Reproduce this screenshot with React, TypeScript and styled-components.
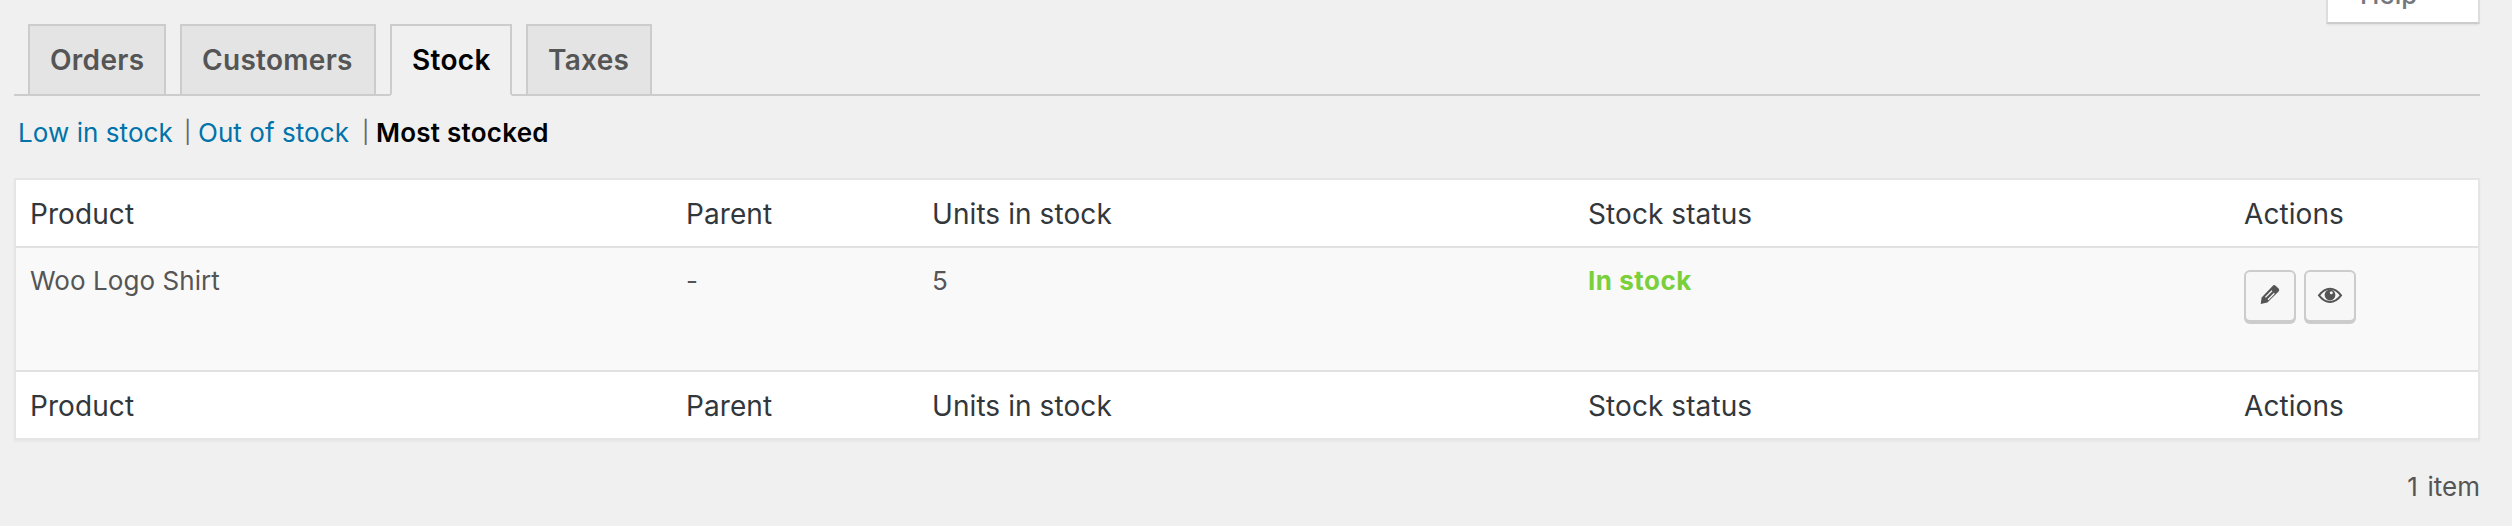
import React from "react";
import styled, { createGlobalStyle } from "styled-components";

const Global = createGlobalStyle`
  * { box-sizing: border-box; }
  body {
    margin: 0;
    background: #f0f0f0;
    color: #555;
    font-family: Inter, "Liberation Sans", sans-serif;
    font-size: 26px;
    line-height: 36px;
  }
`;

const Page = styled.main`
  position: relative;
  height: 526px;
  padding: 24px 32px 0 14px;
  overflow: hidden;
`;

const HelpTab = styled.button`
  position: absolute;
  top: -34px;
  right: 32px;
  width: 154px;
  height: 58px;
  padding: 0 0 0 32px;
  border: 2px solid #ddd;
  border-bottom-color: #ccc;
  background: #fff;
  box-shadow: 0 2px 2px -1px rgba(0, 0, 0, 0.08);
  color: #72777c;
  font: 500 26px/36px Inter, sans-serif;
  text-align: left;
`;

const Tabs = styled.nav`
  display: flex;
  gap: 14px;
  height: 72px;
  padding-left: 14px;
  border-bottom: 2px solid #ccc;
`;

const Tab = styled.a<{ $width: number; $active?: boolean }>`
  width: ${(p) => p.$width}px;
  height: ${(p) => (p.$active ? 72 : 70)}px;
  padding: 10px 0 0 20px;
  border: 2px solid #ccc;
  border-bottom: ${(p) => (p.$active ? "2px solid #f0f0f0" : "0")};
  background: ${(p) => (p.$active ? "#f0f0f0" : "#e4e4e4")};
  color: ${(p) => (p.$active ? "#000" : "#555")};
  font-size: 28px;
  font-weight: 600;
  line-height: 48px;
  letter-spacing: 0.3px;
  white-space: nowrap;
`;

const Filters = styled.div`
  display: flex;
  height: 82px;
  padding: 19px 0 0 4px;
  white-space: nowrap;
`;

const Filter = styled.a<{ $width: number; $current?: boolean }>`
  width: ${(p) => p.$width}px;
  color: ${(p) => (p.$current ? "#000" : "#0073aa")};
  font-weight: ${(p) => (p.$current ? 600 : 400)};
  letter-spacing: ${(p) => (p.$current ? 0.25 : 0.06)}px;
`;

const Divider = styled.span`
  width: 14px;
  color: #666;
  font-size: 22px;
  line-height: 34px;
`;

const Table = styled.section`
  height: 262px;
  border: 2px solid #e5e5e5;
  background: #fff;
  box-shadow: 0 2px 2px rgba(0, 0, 0, 0.04);
`;

const Row = styled.div`
  display: grid;
  grid-template-columns: 656px 246px 656px 656px 1fr;
  padding-left: 14px;
`;

const LabelRow = styled(Row)`
  height: 66px;
  padding-top: 16px;
  color: #32373c;
  font-size: 28px;
  letter-spacing: 0.08px;
`;

const ItemRow = styled(Row)`
  height: 126px;
  padding-top: 15px;
  border-top: 2px solid #e1e1e1;
  border-bottom: 2px solid #e1e1e1;
  background: #f9f9f9;
  letter-spacing: 0.06px;
`;

const Status = styled.strong`
  color: #7ad03a;
  font-weight: 700;
  letter-spacing: 0.5px;
`;

const Actions = styled.div`
  display: flex;
  gap: 8px;
  padding-top: 7px;
`;

const ActionButton = styled.button`
  display: flex;
  align-items: center;
  justify-content: center;
  width: 52px;
  height: 52px;
  padding: 0;
  border: 2px solid #ccc;
  border-radius: 6px;
  background: #f7f7f7;
  box-shadow: 0 2px 0 #ccc;
  color: #555;
`;

const Count = styled.div`
  padding-top: 29px;
  text-align: right;
  word-spacing: 2.5px;
`;

const columns = ["Product", "Parent", "Units in stock", "Stock status", "Actions"];

function Labels() {
  return (
    <LabelRow>
      {columns.map((c) => (
        <span key={c}>{c}</span>
      ))}
    </LabelRow>
  );
}

function Pencil() {
  return (
    <svg width="26" height="26" viewBox="0 0 26 26" fill="none">
      <path d="M3.7 21L4.6 14.4L15.6 3Q17 1.3 18.6 2.8L21.6 5.6Q23 7 21.6 8.6L10.4 19.4Z" fill="currentColor" />
      <path d="M8.4 14.4L15 7.7M11 16.8L17.4 10.3" stroke="#f7f7f7" strokeWidth="1.3" />
    </svg>
  );
}

function Eye() {
  return (
    <svg width="26" height="26" viewBox="0 0 26 26" fill="none">
      <path d="M2 12.4Q7 5.7 13 5.7T24 12.4Q19 19 13 19T2 12.4Z" stroke="currentColor" strokeWidth="2" />
      <circle cx="13" cy="12" r="5.4" fill="currentColor" />
      <circle cx="14.3" cy="9.7" r="1.5" fill="#f7f7f7" />
    </svg>
  );
}

export default function App() {
  return (
    <>
      <Global />
      <Page>
        <HelpTab>Help</HelpTab>
        <Tabs>
          <Tab $width={138}>Orders</Tab>
          <Tab $width={196}>Customers</Tab>
          <Tab $width={122} $active>Stock</Tab>
          <Tab $width={126}>Taxes</Tab>
        </Tabs>
        <Filters>
          <Filter $width={166}>Low in stock</Filter>
          <Divider>|</Divider>
          <Filter $width={164}>Out of stock</Filter>
          <Divider>|</Divider>
          <Filter $width={180} $current>Most stocked</Filter>
        </Filters>
        <Table>
          <Labels />
          <ItemRow>
            <span>Woo Logo Shirt</span>
            <span>-</span>
            <span>5</span>
            <Status>In stock</Status>
            <Actions>
              <ActionButton aria-label="Edit"><Pencil /></ActionButton>
              <ActionButton aria-label="View"><Eye /></ActionButton>
            </Actions>
          </ItemRow>
          <Labels />
        </Table>
        <Count>1 item</Count>
      </Page>
    </>
  );
}
